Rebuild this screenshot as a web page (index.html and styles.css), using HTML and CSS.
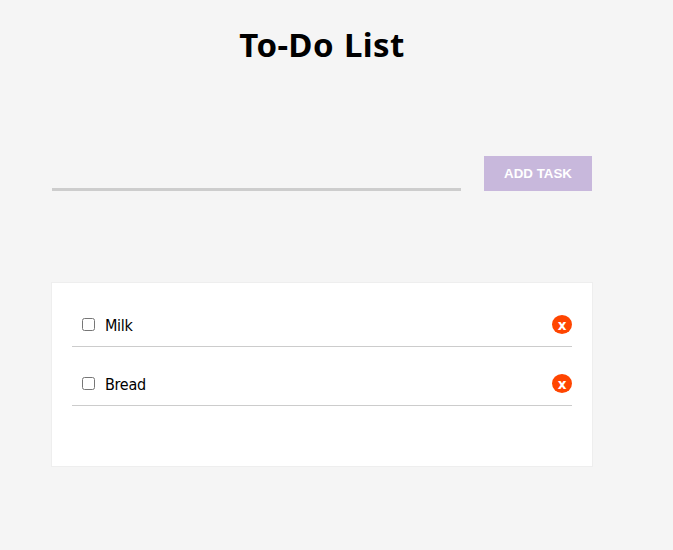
FILE: index.html
```html
<!DOCTYPE html>
<html lang="en">
<head>
<meta charset="utf-8">
<title>To-Do List</title>
<link rel="stylesheet" href="styles.css">
</head>
<body>
<main class="container">
  <h1 class="title">To-Do List</h1>
  <form class="task-form">
    <input class="task-input" type="text" aria-label="Task">
    <button class="add-button" type="button">ADD TASK</button>
  </form>
  <ul class="task-list">
    <li class="task"><input class="check" type="checkbox"><span class="name">Milk</span><button class="delete" type="button">x</button></li>
    <li class="task"><input class="check" type="checkbox"><span class="name">Bread</span><button class="delete" type="button">x</button></li>
  </ul>
</main>
</body>
</html>
```
FILE: styles.css
```css
* { box-sizing: border-box; }
body { margin: 0; background: #f5f5f5; font-family: Tahoma, "DejaVu Sans Condensed", "DejaVu Sans", sans-serif; color: #000; }
.container { width: 542px; margin-left: 51px; padding-top: 22px; }
.title { margin: 0; height: 48px; line-height: 46px; font-family: Tahoma, "Noto Sans", sans-serif; font-size: 33px; letter-spacing: 0.4px; word-spacing: 1px; text-align: center; }
.task-form { display: flex; justify-content: space-between; margin: 86px 1px 0; height: 35px; }
.task-input { width: 409px; padding: 0; border: 0; border-bottom: 3px solid #cdcdcd; background: transparent; outline: 0; }
.add-button { width: 108px; padding: 0; border: 0; background: #c8b8dc; color: #fff; font: bold 13.333px "Liberation Sans", sans-serif; }
.task-list { list-style: none; margin: 91px 0 0; padding: 19px 20px; height: 185px; border: 1px solid #eee; background: #fff; }
.task { display: flex; align-items: center; height: 45px; border-bottom: 1px solid #ccc; }
.task + .task { margin-top: 14px; }
.check { width: 13px; height: 13px; margin: 0 10px; }
.name { flex: 1; padding-top: 2px; font-size: 16px; letter-spacing: -0.3px; }
.delete { width: 20px; height: 19px; padding: 1px 0 0; border: 0; border-radius: 50%; background: #ff4500; color: #fff; font: bold 13.5px "DejaVu Sans", sans-serif; }
```
